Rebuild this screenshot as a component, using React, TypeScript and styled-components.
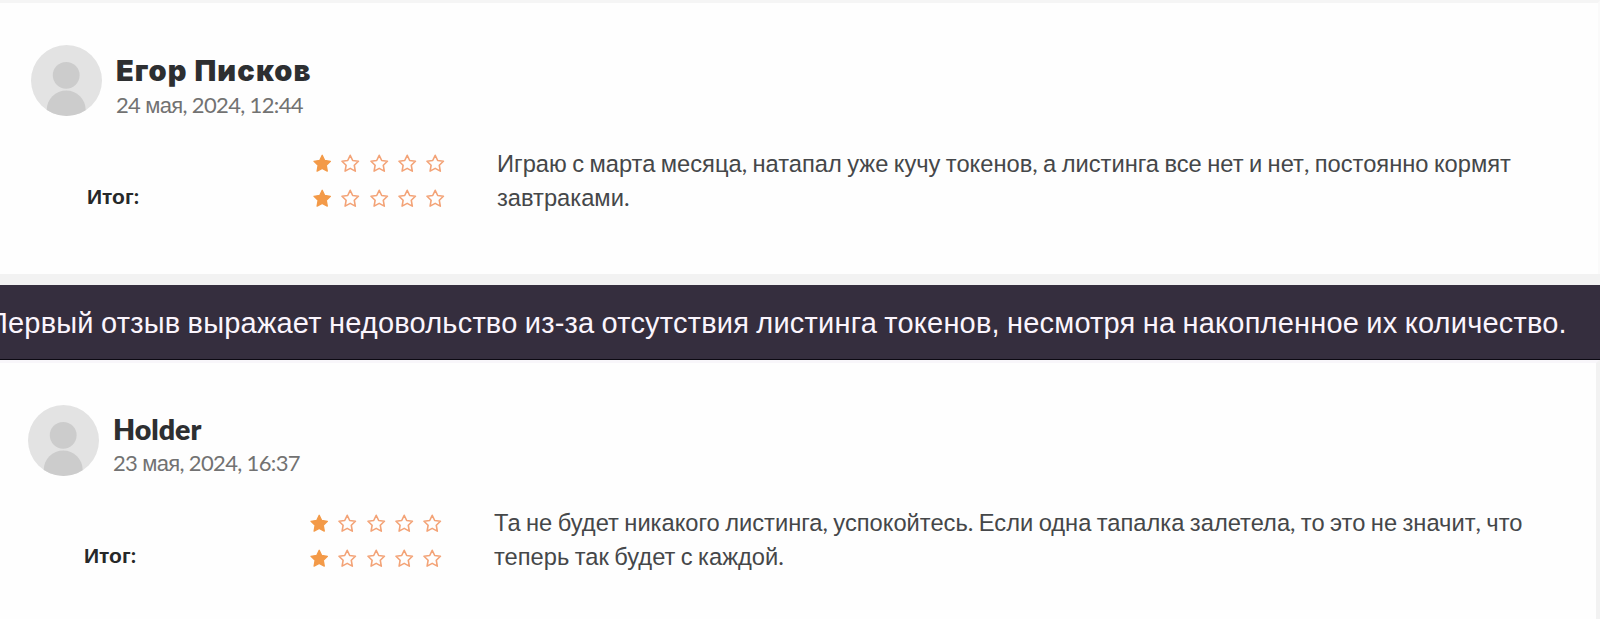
import React from "react";
import styled, { createGlobalStyle } from "styled-components";

const GlobalStyle = createGlobalStyle`
  * { box-sizing: border-box; }
  body { margin: 0; background: #fefefe; overflow: hidden; }
`;

const Page = styled.main`
  display: flex;
  flex-direction: column;
  width: 1600px;
  height: 619px;
  overflow: hidden;
  font-family: "Liberation Sans", Arial, sans-serif;
`;

const Card = styled.article<{ $height: number; $top: string; $edge: string; $left: number }>`
  flex: none;
  height: ${(p) => p.$height}px;
  padding: 42px 0 0 ${(p) => p.$left}px;
  border-top: 3px solid ${(p) => p.$top};
  border-right: ${(p) => p.$edge};
  background: #fefefe;
`;

const Shadow = styled.div`
  flex: none;
  height: 11px;
  background: #f2f2f2;
`;

const Banner = styled.section`
  flex: none;
  height: 75px;
  display: flex;
  align-items: center;
  padding-top: 1px;
  background: #352e3e;
  border-bottom: 1px solid #0c0912;
  overflow: hidden;
`;

const BannerText = styled.p`
  margin: 0 0 0 -13px;
  white-space: nowrap;
  font-size: 29px;
  line-height: 36px;
  letter-spacing: 0.2px;
  word-spacing: -1px;
  color: #fbf5fd;
`;

const Header = styled.header`
  display: flex;
  gap: 14px;
  height: 71px;
`;

const Author = styled.div<{ $top: number }>`
  display: flex;
  flex-direction: column;
  padding-top: ${(p) => p.$top}px;
`;

const Name = styled.h3<{ $cyrillic: boolean }>`
  margin: 0;
  font-family: ${(p) => (p.$cyrillic ? "Inter" : "Lato")}, sans-serif;
  font-size: ${(p) => (p.$cyrillic ? 29 : 28.5)}px;
  line-height: 36px;
  font-weight: ${(p) => (p.$cyrillic ? 900 : 800)};
  letter-spacing: ${(p) => (p.$cyrillic ? "1.1px" : "0")};
  color: #2d2f31;
  white-space: nowrap;
`;

const PostedAt = styled.time`
  font-size: 22px;
  line-height: 34px;
  letter-spacing: -0.65px;
  color: #727272;
  white-space: nowrap;
`;

const Body = styled.div<{ $top: number }>`
  display: grid;
  grid-template-columns: 226px 184px 1fr;
  padding: ${(p) => p.$top}px 0 0 56px;
`;

const Label = styled.strong`
  padding-top: 34px;
  font-size: 21px;
  line-height: 34px;
  color: #262829;
`;

const Ratings = styled.div<{ $top: number }>`
  display: flex;
  flex-direction: column;
  gap: 16px;
  padding-top: ${(p) => p.$top}px;
`;

const StarRow = styled.div`
  display: flex;
  gap: 9.3px;
  height: 19px;
`;

const Text = styled.p`
  margin: 1px 0 0;
  font-size: 23.7px;
  line-height: 34px;
  word-spacing: -0.65px;
  color: #454749;
  white-space: nowrap;
`;

const Latin = styled.span`
  font-family: Lato, sans-serif;
  line-height: 0;
`;

// Cyrillic words keep the inherited face; digits, spaces and punctuation use Lato.
const Mixed = ({ children }: { children: string }) => (
  <>
    {children
      .split(/([А-Яа-яЁё]+)/)
      .map((run, i) => (i % 2 ? run : run ? <Latin key={i}>{run}</Latin> : null))}
  </>
);

const Star = ({ filled }: { filled: boolean }) => (
  <svg width="19" height="19" viewBox="0 0 19 19">
    <path
      d="M9.2 1.3 11.7 6.5l5.7.8-4.1 4 1 5.8-5.1-2.7-5.1 2.7 1-5.8-4.1-4L6.7 6.5Z"
      fill={filled ? "#f39a48" : "none"}
      stroke={filled ? "#f39a48" : "#f3a377"}
      strokeWidth={filled ? 1.3 : 1.6}
      strokeLinejoin="round"
    />
  </svg>
);

const Avatar = ({ id }: { id: string }) => (
  <svg width="71" height="71" viewBox="0 0 71 71">
    <clipPath id={id}>
      <circle cx="35.5" cy="35.5" r="35.5" />
    </clipPath>
    <g clipPath={`url(#${id})`}>
      <rect width="71" height="71" fill="#e3e3e3" />
      <circle cx="35.2" cy="30.3" r="13.4" fill="#cccccc" />
      <circle cx="35.2" cy="65" r="19.5" fill="#cccccc" />
    </g>
  </svg>
);

const Stars = ({ value }: { value: number }) => (
  <StarRow>
    {[1, 2, 3, 4, 5].map((n) => (
      <Star key={n} filled={n <= value} />
    ))}
  </StarRow>
);

interface Review {
  id: string;
  name: string;
  date: string;
  lines: string[];
}

const ReviewContent = ({ review, cyrillic }: { review: Review; cyrillic: boolean }) => (
  <>
    <Header>
      <Avatar id={review.id} />
      <Author $top={cyrillic ? 7.5 : 6}>
        <Name $cyrillic={cyrillic}>{review.name}</Name>
        <PostedAt>
          <Mixed>{review.date}</Mixed>
        </PostedAt>
      </Author>
    </Header>
    <Body $top={cyrillic ? 30 : 28.5}>
      <Label>
        <Mixed>Итог:</Mixed>
      </Label>
      <Ratings $top={cyrillic ? 8 : 9.5}>
        <Stars value={1} />
        <Stars value={1} />
      </Ratings>
      <Text>
        <Mixed>{review.lines[0]}</Mixed>
        <br />
        <Mixed>{review.lines[1]}</Mixed>
      </Text>
    </Body>
  </>
);

const first: Review = {
  id: "avatar-egor",
  name: "Егор Писков",
  date: "24 мая, 2024, 12:44",
  lines: [
    "Играю с марта месяца, натапал уже кучу токенов, а листинга все нет и нет, постоянно кормят",
    "завтраками.",
  ],
};

const second: Review = {
  id: "avatar-holder",
  name: "Holder",
  date: "23 мая, 2024, 16:37",
  lines: [
    "Та не будет никакого листинга, успокойтесь. Если одна тапалка залетела, то это не значит, что",
    "теперь так будет с каждой.",
  ],
};

export default function App() {
  return (
    <>
      <GlobalStyle />
      <Page>
        <Card $height={274} $top="#f5f5f5" $edge="2px solid #fafafa" $left={31}>
          <ReviewContent review={first} cyrillic />
        </Card>
        <Shadow />
        <Banner>
          <BannerText>
            Первый отзыв выражает недовольство из-за отсутствия листинга токенов, несмотря на
            накопленное их количество.
          </BannerText>
        </Banner>
        <Card $height={259} $top="#f8f6fa" $edge="4px solid #f2f2f2" $left={28}>
          <ReviewContent review={second} cyrillic={false} />
        </Card>
      </Page>
    </>
  );
}
